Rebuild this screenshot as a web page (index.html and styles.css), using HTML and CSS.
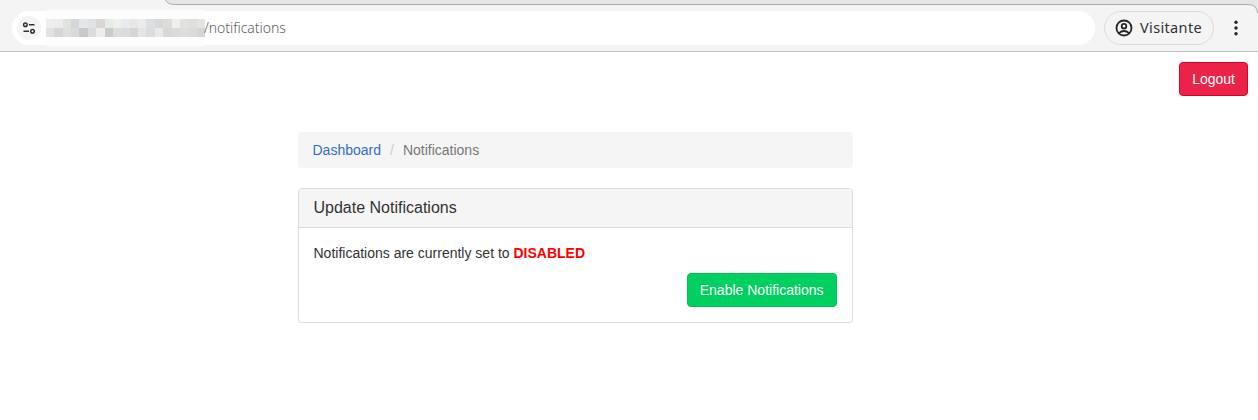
FILE: index.html
```html
<!DOCTYPE html>
<html lang="en">
<head>
<meta charset="utf-8">
<title>Notifications</title>
<link rel="stylesheet" href="styles.css">
</head>
<body>
<header class="toolbar">
  <svg class="tab-strip" width="1093" height="14" viewBox="0 0 1093 14"><path d="M0-1Q2 4.5 10 4.5H1083Q1092 4.5 1092.5 13H1095V-1Z" fill="#e6e6e6" stroke="#adadad"/></svg>
  <div class="address">
    <span class="site-info"><svg width="14" height="14" viewBox="0 0 14 14" fill="none" stroke="#303134" stroke-width="1.5"><circle cx="3.4" cy="3.8" r="1.8"/><path d="M7 3.8h5.5M1.5 10.2h5.5"/><circle cx="10.5" cy="10.2" r="1.8"/></svg></span>
    <span class="host"><svg width="159" height="18" viewBox="0 0 19 2" preserveAspectRatio="none" shape-rendering="crispEdges">
      <g stroke-width="1" fill="none">
        <path d="M0 .5h1" stroke="#f0eeec"/><path d="M1 .5h1" stroke="#eaedee"/><path d="M2 .5h1" stroke="#e1e2dd"/><path d="M3 .5h1" stroke="#d4d7da"/><path d="M4 .5h1" stroke="#e4e6e9"/><path d="M5 .5h1" stroke="#dfe2e5"/><path d="M6 .5h1" stroke="#d9d7d5"/><path d="M7 .5h1" stroke="#e9e9e7"/><path d="M8 .5h1" stroke="#eef0f0"/><path d="M9 .5h1" stroke="#e7ebec"/><path d="M10 .5h1" stroke="#e8e7e3"/><path d="M11 .5h1" stroke="#eaebed"/><path d="M12 .5h1" stroke="#dcdfe2"/><path d="M13 .5h1" stroke="#d6d8da"/><path d="M14 .5h1" stroke="#dcdcd8"/><path d="M15 .5h1" stroke="#efefef"/><path d="M16 .5h1" stroke="#e2e2e1"/><path d="M17 .5h1" stroke="#e0dfdc"/><path d="M18 .5h1" stroke="#e4e4e4"/>
        <path d="M0 1.5h1" stroke="#e3e2e3"/><path d="M1 1.5h1" stroke="#d9d5d3"/><path d="M2 1.5h1" stroke="#dedfe0"/><path d="M3 1.5h1" stroke="#d8dadc"/><path d="M4 1.5h1" stroke="#c8c9cb"/><path d="M5 1.5h1" stroke="#dcdcdd"/><path d="M6 1.5h1" stroke="#efece9"/><path d="M7 1.5h1" stroke="#c9ccce"/><path d="M8 1.5h1" stroke="#dfdcda"/><path d="M9 1.5h1" stroke="#dadde0"/><path d="M10 1.5h1" stroke="#d5d5d5"/><path d="M11 1.5h1" stroke="#e5e5e6"/><path d="M12 1.5h1" stroke="#dadce0"/><path d="M13 1.5h1" stroke="#e9e9ea"/><path d="M14 1.5h1" stroke="#d9d8d5"/><path d="M15 1.5h1" stroke="#dcdbda"/><path d="M16 1.5h1" stroke="#dddddb"/><path d="M17 1.5h1" stroke="#dcdbd8"/><path d="M18 1.5h1" stroke="#d6d6d6"/>
      </g>
    </svg></span>
    <span class="path">/notifications</span>
  </div>
  <div class="profile">
    <svg width="18" height="18" viewBox="0 0 18 18" fill="none" stroke="#242528" stroke-width="1.8"><circle cx="9" cy="9" r="7.5"/><circle cx="9" cy="7.2" r="2.3"/><path d="M3.8 14.1Q9 9.8 14.2 14.1"/></svg>
    <span class="profile-name">Visitante</span>
  </div>
  <svg class="menu" width="4" height="16" viewBox="0 0 4 16" fill="#242528"><circle cx="2" cy="2.3" r="1.7"/><circle cx="2" cy="8" r="1.7"/><circle cx="2" cy="13.7" r="1.7"/></svg>
</header>
<main class="page">
  <div class="session"><button class="btn btn-danger">Logout</button></div>
  <div class="content">
    <nav class="breadcrumb"><a class="crumb-link" href="#">Dashboard</a><span class="separator">/</span><span class="current">Notifications</span></nav>
    <section class="panel">
      <h1 class="panel-heading">Update Notifications</h1>
      <div class="panel-body">
        <p class="status">Notifications are currently set to <strong class="disabled">DISABLED</strong></p>
        <button class="btn btn-success">Enable Notifications</button>
      </div>
    </section>
  </div>
</main>
</body>
</html>
```
FILE: styles.css
```css
* { box-sizing: border-box; }
body {
  margin: 0;
  background: #fff;
  color: #333;
  font: 14px/20px "Liberation Sans", Arial, sans-serif;
}
svg { display: block; flex: none; }
.toolbar {
  position: relative;
  display: flex;
  align-items: center;
  height: 52px;
  padding: 5px 20px 0 12px;
  background: #f4f4f4;
  border-bottom: 1px solid #c1c1c1;
  color: #303134;
  font-family: "Noto Sans", sans-serif;
}
.tab-strip { position: absolute; top: 0; right: 0; }
.address {
  display: flex;
  align-items: center;
  width: 1083px;
  height: 34px;
  padding-left: 5px;
  background: #fff;
  border-radius: 17px;
}
.site-info {
  display: grid;
  place-items: center;
  width: 24px;
  height: 24px;
  margin-right: 5px;
  border-radius: 50%;
  background: #f4f4f4;
}
.host {
  display: flex;
  align-items: center;
  height: 36px;
  background: #fdfdfd;
}
.path { margin-left: -1px; color: #606164; font-size: 14px; font-weight: 300; letter-spacing: -.05px; }
.profile {
  display: flex;
  align-items: center;
  gap: 7px;
  width: 110px;
  height: 34px;
  margin-left: 9px;
  padding-left: 10px;
  border: 1px solid #dadada;
  border-radius: 17px;
}
.profile-name { position: relative; top: -1px; font-size: 14.5px; letter-spacing: .35px; }
.menu { margin-left: 20px; }
.session { display: flex; justify-content: flex-end; padding: 10px 10px 0; }
.btn {
  height: 34px;
  padding: 6px 12px;
  border: 1px solid;
  border-radius: 4px;
  color: #fff;
  font: inherit;
}
.btn-danger { background: #ec2348; border-color: #dc0030; }
.btn-success { background: #00d05f; border-color: #00c151; }
.content { width: 555px; margin: 36px 0 0 297.5px; }
.breadcrumb {
  height: 36px;
  margin-bottom: 20px;
  padding: 8px 15px;
  background: #f5f5f5;
  border-radius: 4px;
}
.crumb-link { color: #2f70bd; text-decoration: none; }
.separator { padding: 0 9px; color: #ccc; }
.current { color: #777; }
.panel {
  height: 135px;
  border: 1px solid #dcdcdc;
  border-radius: 4px;
  box-shadow: 0 1px 1px rgba(0, 0, 0, .05);
}
.panel-heading {
  height: 39px;
  margin: 0;
  padding: 10px 15px;
  border-bottom: 1px solid #dcdcdc;
  border-radius: 3px 3px 0 0;
  background: #f5f5f5;
  font-size: 16px;
  line-height: 18px;
  font-weight: 400;
}
.panel-body {
  display: flex;
  flex-direction: column;
  align-items: flex-end;
  padding: 15px;
}
.status { align-self: stretch; margin: 0 0 10px; }
.disabled { color: red; }
```
